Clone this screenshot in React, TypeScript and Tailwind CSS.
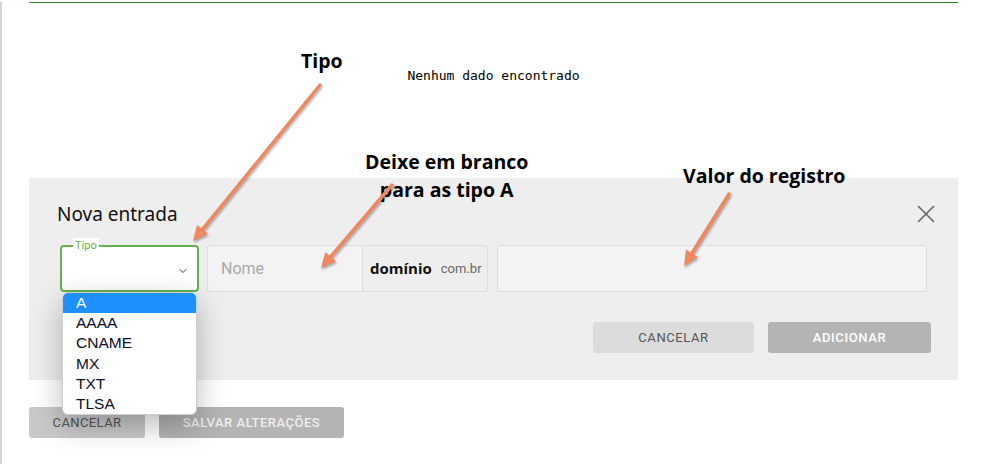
// Tela de registros DNS com o formulário "Nova entrada" aberto e anotações
import { X, ChevronDown } from "lucide-react";

const TIPOS = ["A", "AAAA", "CNAME", "MX", "TXT", "TLSA"];

function Arrow({ x1, y1, x2, y2 }: { x1: number; y1: number; x2: number; y2: number }) {
  const ang = Math.atan2(y2 - y1, x2 - x1);
  const len = 15;
  const wing = 7;
  const bx = x2 - Math.cos(ang) * len;
  const by = y2 - Math.sin(ang) * len;
  const px = Math.sin(ang) * wing;
  const py = -Math.cos(ang) * wing;
  return (
    <g>
      <line x1={x1} y1={y1} x2={bx} y2={by} stroke="#f0875f" strokeWidth={3.5} strokeLinecap="round" />
      <polygon points={`${x2},${y2} ${bx + px},${by + py} ${bx - px},${by - py}`} fill="#f0875f" />
    </g>
  );
}

export default function App() {
  return (
    <div className="relative min-h-[464px] bg-white border-l-2 border-[#d4d4d4] font-['Roboto',sans-serif]">
      <div className="ml-[27px] w-[929px]">
        <div className="mt-[2px] h-px bg-[#2e8b3e]" />

        {/* sem registros */}
        <div className="h-[175px] pt-[63px] text-center font-['DejaVu_Sans_Mono',monospace] text-[13px] text-black">
          Nenhum dado encontrado
        </div>

        {/* nova entrada */}
        <div className="bg-[#eeeeee] pl-[28px] pr-[27px] pt-[24px] pb-[27px]">
          <div className="flex h-6 items-center justify-between">
            <h2 className="text-[19px] leading-6 text-[#111] font-['Noto_Sans',sans-serif]">Nova entrada</h2>
            <X size={30} strokeWidth={1.3} className="text-[#666] -my-[3px] mr-[-10px]" />
          </div>

          <div className="mt-[19px] flex items-stretch h-[47px]">
            <div className="relative ml-[3px] w-[139px] rounded-[4px] border-2 border-[#66b04f] bg-white">
              <span className="absolute -top-[9px] left-[11px] bg-white px-[2px] text-[11px] leading-4 text-[#6ab04c]">Tipo</span>
              <ChevronDown size={12} strokeWidth={2} className="absolute right-[8px] top-[18px] text-[#444]" />
              {/* lista aberta */}
              <ul className="absolute left-0 top-[45px] z-10 w-[135px] overflow-hidden rounded-[6px] bg-white shadow-[0_10px_30px_rgba(0,0,0,0.28)] border border-[#cfcfcf] font-['Liberation_Sans',sans-serif] text-[15.5px] leading-[20.2px] text-[#0d0d26]">
                {TIPOS.map((t, i) => (
                  <li key={t} className={i === 0 ? "bg-[#1e90ff] pl-[13px] text-white" : "pl-[13px]"}>
                    {t}
                  </li>
                ))}
              </ul>
            </div>
            <div className="ml-[8px] flex w-[156px] items-center rounded-l-[3px] border border-[#dddddd] bg-[#f3f3f3] pl-[13px] text-[16px] text-[#a8a8a8]">
              Nome
            </div>
            <div className="flex w-[125px] items-center gap-[9px] rounded-r-[3px] border border-l-0 border-[#dddddd] bg-[#eeeeee] pl-[7px]">
              <span className="font-['Open_Sans',sans-serif] text-[15px] font-bold text-[#111]">domínio</span>
              <span className="text-[13px] text-[#666]">com.br</span>
            </div>
            <div className="ml-[9px] mr-[4px] flex-1 rounded-[3px] border border-[#dddddd] bg-[#f3f3f3]" />
          </div>

          <div className="mt-[30px] flex justify-end gap-[14px]">
            <button className="h-[31px] w-[161px] rounded-[3px] bg-[#dcdcdc] text-[13px] tracking-[0.6px] text-[#555]">
              CANCELAR
            </button>
            <button className="h-[31px] w-[163px] rounded-[3px] bg-[#b4b4b4] text-[13px] font-medium tracking-[0.6px] text-white">
              ADICIONAR
            </button>
          </div>
        </div>

        <div className="mt-[27px] flex gap-[14px]">
          <button className="h-[31px] w-[116px] rounded-[3px] bg-[#c9c9c9] text-[13px] tracking-[0.4px] text-[#555]">
            CANCELAR
          </button>
          <button className="h-[31px] w-[185px] rounded-[3px] bg-[#b4b4b4] text-[13px] font-medium tracking-[0.5px] text-[#eeeeee]">
            SALVAR ALTERAÇÕES
          </button>
        </div>
      </div>

      {/* anotações */}
      <div className="pointer-events-none absolute inset-0 font-['Open_Sans',sans-serif] text-[19.5px] font-bold leading-[28px] text-black">
        <div className="absolute left-[299px] top-[45px]">Tipo</div>
        <div className="absolute left-[363px] top-[146px] text-center">
          Deixe em branco
          <br />
          para as tipo A
        </div>
        <div className="absolute left-[681px] top-[160px]">Valor do registro</div>
        <svg className="absolute inset-0 drop-shadow-[1px_2px_1px_rgba(0,0,0,0.3)]" width="983" height="464">
          <Arrow x1={318} y1={83} x2={191} y2={239} />
          <Arrow x1={390} y1={183} x2={319} y2={266} />
          <Arrow x1={727} y1={192} x2={682} y2={264} />
        </svg>
      </div>
    </div>
  );
}
